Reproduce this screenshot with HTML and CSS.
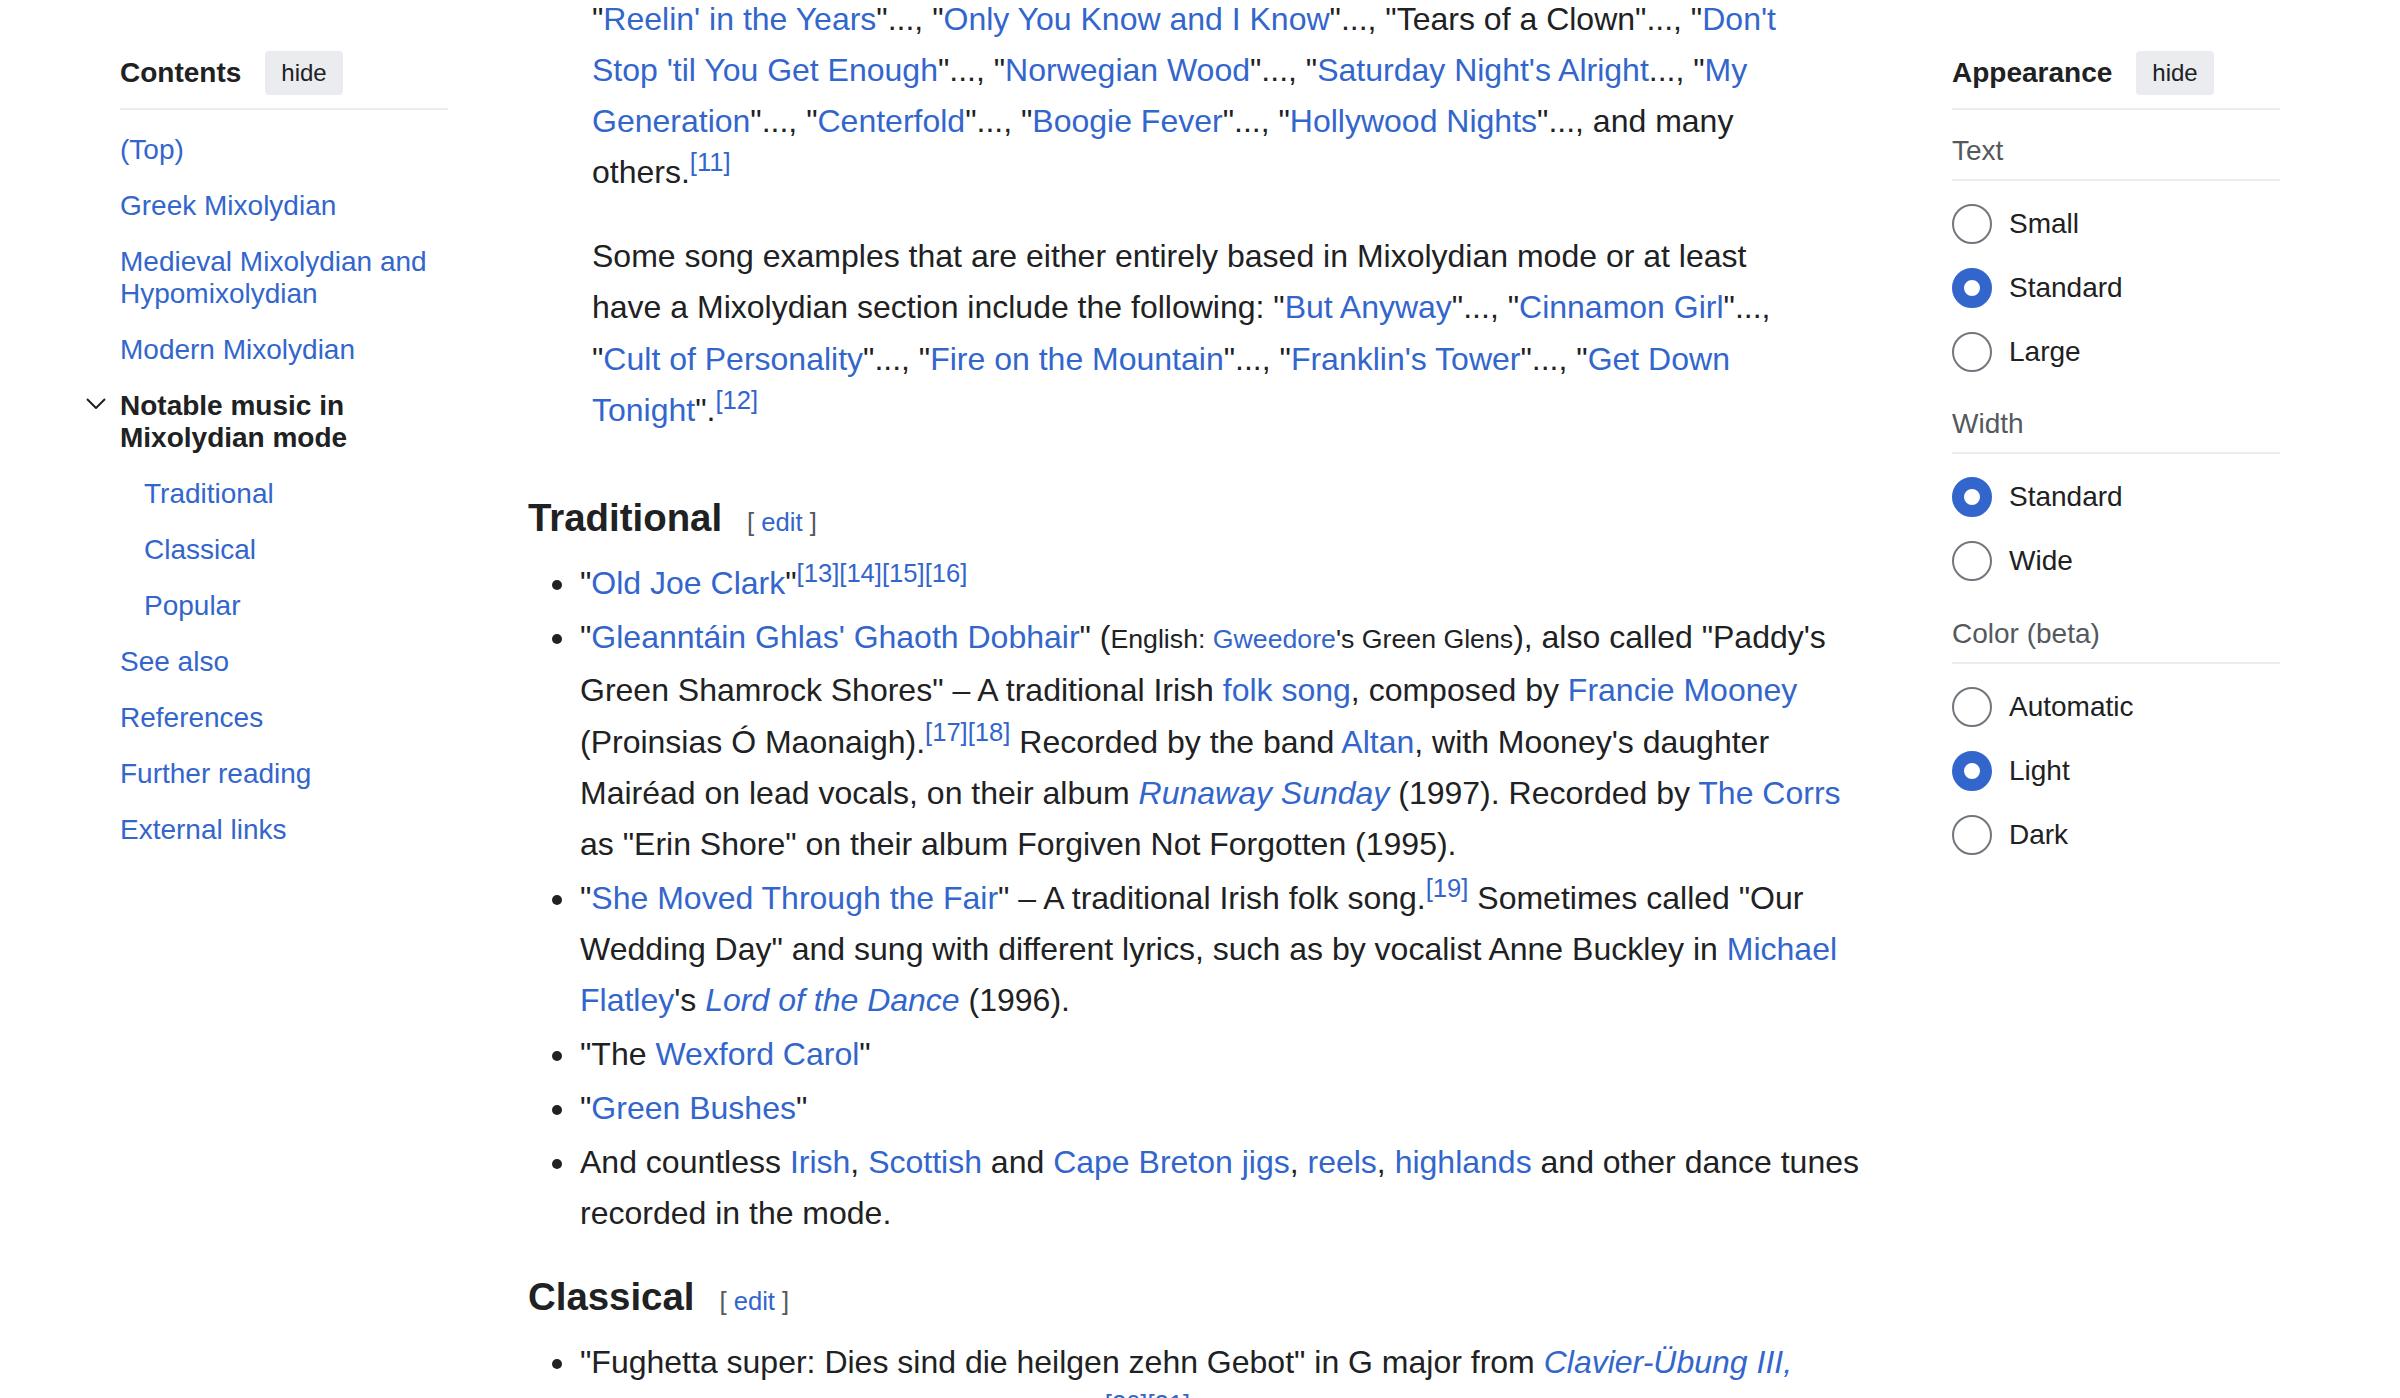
FILE: index.html
```html
<!DOCTYPE html>
<html lang="en">
<head>
<meta charset="utf-8">
<title>Mixolydian mode</title>
<link rel="stylesheet" href="styles.css">
</head>
<body>
<div class="page">
  <nav class="toc">
    <div class="panel-head"><span class="panel-title">Contents</span><button class="hide-btn">hide</button></div>
    <ul class="toc-list">
      <li><a class="toc-link" href="#">(Top)</a></li>
      <li><a class="toc-link" href="#">Greek Mixolydian</a></li>
      <li><a class="toc-link" href="#">Medieval Mixolydian and Hypomixolydian</a></li>
      <li><a class="toc-link" href="#">Modern Mixolydian</a></li>
      <li class="toc-open">
        <span class="toc-toggle"><svg width="20" height="11" viewBox="0 0 20 11"><polyline points="1,1 10,10 19,1" fill="none" stroke="#202122" stroke-width="2"/></svg></span>
        <span class="toc-link toc-current">Notable music in Mixolydian mode</span>
        <ul class="toc-sub">
          <li><a class="toc-link" href="#">Traditional</a></li>
          <li><a class="toc-link" href="#">Classical</a></li>
          <li><a class="toc-link" href="#">Popular</a></li>
        </ul>
      </li>
      <li><a class="toc-link" href="#">See also</a></li>
      <li><a class="toc-link" href="#">References</a></li>
      <li><a class="toc-link" href="#">Further reading</a></li>
      <li><a class="toc-link" href="#">External links</a></li>
    </ul>
  </nav>

  <main class="content">
    <blockquote class="quote">
      <p>"<a href="#">Reelin' in the Years</a>"..., "<a href="#">Only You Know and I Know</a>"..., "Tears of a Clown"..., "<a href="#">Don't Stop 'til You Get Enough</a>"..., "<a href="#">Norwegian Wood</a>"..., "<a href="#">Saturday Night's Alright</a>..., "<a href="#">My Generation</a>"..., "<a href="#">Centerfold</a>"..., "<a href="#">Boogie Fever</a>"..., "<a href="#">Hollywood Nights</a>"..., and many others.<sup class="ref"><a href="#">[11]</a></sup></p>
      <p>Some song examples that are either entirely based in Mixolydian mode or at least have a Mixolydian section include the following: "<a href="#">But Anyway</a>"..., "<a href="#">Cinnamon Girl</a>"..., "<a href="#">Cult of Personality</a>"..., "<a href="#">Fire on the Mountain</a>"..., "<a href="#">Franklin's Tower</a>"..., "<a href="#">Get Down Tonight</a>".<sup class="ref"><a href="#">[12]</a></sup></p>
    </blockquote>

    <h3 class="section-title">Traditional<span class="editsection">[ <a href="#">edit</a> ]</span></h3>
    <ul class="bullets">
      <li>"<a href="#">Old Joe Clark</a>"<sup class="ref"><a href="#">[13]</a><a href="#">[14]</a><a href="#">[15]</a><a href="#">[16]</a></sup></li>
      <li>"<a href="#">Gleanntáin Ghlas' Ghaoth Dobhair</a>" (<span class="small">English: <a href="#">Gweedore</a>'s Green Glens</span>), also called "Paddy's Green Shamrock Shores" – A traditional Irish <a href="#">folk song</a>, composed by <a href="#">Francie Mooney</a> (Proinsias Ó Maonaigh).<sup class="ref"><a href="#">[17]</a><a href="#">[18]</a></sup> Recorded by the band <a href="#">Altan</a>, with Mooney's daughter Mairéad on lead vocals, on their album <a href="#"><i>Runaway Sunday</i></a> (1997). Recorded by <a href="#">The Corrs</a> as "Erin Shore" on their album Forgiven Not Forgotten (1995).</li>
      <li>"<a href="#">She Moved Through the Fair</a>" – A traditional Irish folk song.<sup class="ref"><a href="#">[19]</a></sup> Sometimes called "Our Wedding Day" and sung with different lyrics, such as by vocalist Anne Buckley in <a href="#">Michael Flatley</a>'s <a href="#"><i>Lord of the Dance</i></a> (1996).</li>
      <li>"The <a href="#">Wexford Carol</a>"</li>
      <li>"<a href="#">Green Bushes</a>"</li>
      <li>And countless <a href="#">Irish</a>, <a href="#">Scottish</a> and <a href="#">Cape Breton jigs</a>, <a href="#">reels</a>, <a href="#">highlands</a> and other dance tunes recorded in the mode.</li>
    </ul>

    <h3 class="section-title">Classical<span class="editsection">[ <a href="#">edit</a> ]</span></h3>
    <ul class="bullets">
      <li>"Fughetta super: Dies sind die heilgen zehn Gebot" in G major from <a href="#"><i>Clavier-Übung III,</i></a> BWV 679 by Johann Sebastian Bach<sup class="ref"><a href="#">[20]</a><a href="#">[21]</a></sup></li>
    </ul>
  </main>

  <aside class="appearance">
    <div class="panel-head"><span class="panel-title">Appearance</span><button class="hide-btn">hide</button></div>
    <section class="app-section">
      <div class="app-label">Text</div>
      <div class="radios">
        <label class="radio"><span class="dot"></span>Small</label>
        <label class="radio"><span class="dot on"></span>Standard</label>
        <label class="radio"><span class="dot"></span>Large</label>
      </div>
    </section>
    <section class="app-section">
      <div class="app-label">Width</div>
      <div class="radios">
        <label class="radio"><span class="dot on"></span>Standard</label>
        <label class="radio"><span class="dot"></span>Wide</label>
      </div>
    </section>
    <section class="app-section">
      <div class="app-label">Color (beta)</div>
      <div class="radios">
        <label class="radio"><span class="dot"></span>Automatic</label>
        <label class="radio"><span class="dot on"></span>Light</label>
        <label class="radio"><span class="dot"></span>Dark</label>
      </div>
    </section>
  </aside>
</div>
</body>
</html>
```

FILE: styles.css
```css
* { box-sizing: border-box; }

html, body { overflow: hidden; }

body {
  margin: 0;
  font-family: "Liberation Sans", Arial, sans-serif;
  color: #202122;
  background: #ffffff;
}

a { color: #3366cc; text-decoration: none; }

.page {
  display: flex;
  align-items: flex-start;
  padding: 0 120px;
}

/* ---------- side panels ---------- */
.toc, .appearance {
  width: 328px;
  flex: none;
}

.panel-head {
  display: flex;
  align-items: center;
  gap: 24px;
  margin-top: 51px;
  padding-bottom: 13px;
  border-bottom: 2px solid #eaecf0;
}

.panel-title {
  font-size: 28px;
  line-height: 32px;
  font-weight: bold;
}

.hide-btn {
  height: 44px;
  padding: 0 16px;
  font-family: "Liberation Sans", Arial, sans-serif;
  font-size: 24px;
  color: #202122;
  background: #eaecf0;
  border: none;
  border-radius: 4px;
}

.toc-list {
  list-style: none;
  margin: 11.5px 0 0;
  padding: 0;
  font-size: 28px;
  line-height: 32px;
}

.toc-link {
  display: block;
  padding: 12px 0;
}

.toc-current {
  font-weight: bold;
  color: #202122;
}

.toc-open { position: relative; }

.toc-toggle {
  position: absolute;
  left: -34px;
  top: 20px;
  width: 20px;
  height: 11px;
  line-height: 0;
}

.toc-sub {
  list-style: none;
  margin: 0;
  padding: 0 0 0 24px;
}

/* appearance */
.app-section { margin-top: 36.5px; }
.panel-head + .app-section { margin-top: 24.5px; }

.app-label {
  font-size: 28px;
  line-height: 32px;
  color: #54595d;
  padding-bottom: 12px;
  border-bottom: 2px solid #eaecf0;
}

.radios {
  display: flex;
  flex-direction: column;
  gap: 24px;
  margin-top: 23px;
}

.radio {
  display: flex;
  align-items: center;
  gap: 17px;
  font-size: 28px;
  line-height: 32px;
}

.dot {
  flex: none;
  width: 40px;
  height: 40px;
  border-radius: 50%;
  border: 2px solid #72777d;
  background: #ffffff;
}

.dot.on { border: 12px solid #3366cc; }

/* ---------- article ---------- */
.content {
  width: 1338px;
  flex: none;
  margin: -6.5px 86px 0 80px;
  font-size: 32px;
  line-height: 51.2px;
}

.quote {
  margin: 0 0 51px;
  padding: 0 64px;
}

.quote p { margin: 0; }
.quote p + p { margin-top: 32.8px; }

.section-title {
  font-size: 38.4px;
  line-height: 61.44px;
  font-weight: bold;
  margin: 27px 0 0;
  color: #202122;
}

.editsection {
  font-size: 25.6px;
  font-weight: normal;
  color: #54595d;
  margin-left: 25px;
}

.bullets {
  list-style: none;
  margin: 5px 0 0;
  padding: 0 0 0 52px;
}

.bullets li { margin-bottom: 2.6px; }

.bullets li::before {
  content: "";
  float: left;
  width: 10px;
  height: 10px;
  margin: 22px 0 0 -28px;
  border-radius: 50%;
  background: #202122;
}

.ref {
  font-size: 25.6px;
  line-height: 0;
  vertical-align: super;
}

.small { font-size: 26.7px; }
```
